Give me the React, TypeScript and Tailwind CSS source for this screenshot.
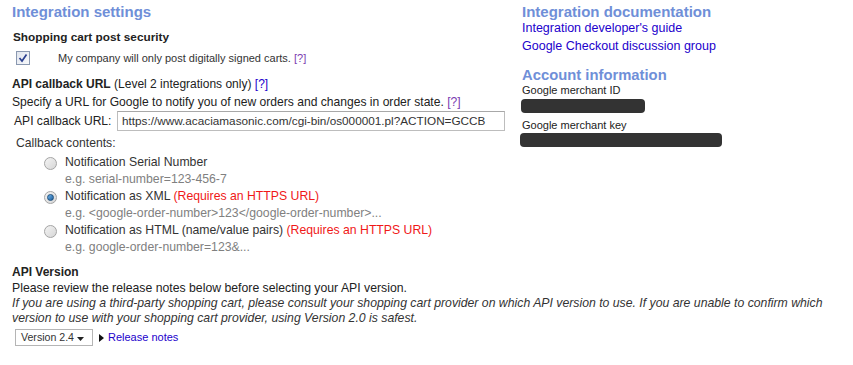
import React from 'react'

const font = { fontFamily: '"Liberation Sans", Arial, sans-serif' }

function Radio({ checked }: { checked?: boolean }) {
  return (
    <span className="relative mt-[2px] flex h-[13px] w-[13px] shrink-0 items-center justify-center rounded-full border border-[#a4a4a4] bg-gradient-to-br from-[#f4f4f4] to-[#d6d6d6]">
      {checked && (
        <span className="h-[7px] w-[7px] rounded-full border border-[#1d4f7c] bg-gradient-to-br from-[#6fb3e8] to-[#1b5f9e]" />
      )}
    </span>
  )
}

function Help() {
  return <span className="text-[#7a3bb0]">[?]</span>
}

export default function App() {
  const options = [
    { label: 'Notification Serial Number', req: false, example: 'e.g. serial-number=123-456-7' },
    {
      label: 'Notification as XML',
      req: true,
      checked: true,
      example: 'e.g. <google-order-number>123</google-order-number>...',
    },
    { label: 'Notification as HTML (name/value pairs)', req: true, example: 'e.g. google-order-number=123&...' },
  ]

  return (
    <div className="h-[365px] w-[853px] overflow-hidden bg-white text-[#222]" style={font}>
      <div className="flex">
        {/* left column */}
        <div className="w-[510px] shrink-0 pl-3 pt-[4px]">
          <h1 className="text-[15px] font-bold leading-[15px] text-[#6f8fd8]">Integration settings</h1>

          <h2 className="mt-[10px] pl-px text-[11.8px] font-bold leading-[16px]">Shopping cart post security</h2>
          <div className="mt-[5px] flex h-[16px] items-center">
            <svg width="14" height="14" viewBox="0 0 14 14" className="ml-[4px]">
              <defs>
                <linearGradient id="cb" x1="0" y1="0" x2="1" y2="1">
                  <stop offset="0" stopColor="#dfe4ee" />
                  <stop offset="1" stopColor="#f8f9fb" />
                </linearGradient>
              </defs>
              <rect x="0.5" y="0.5" width="13" height="13" fill="url(#cb)" stroke="#8a98b0" />
              <path d="M3.5 7 L6 10 L10.5 3.5" fill="none" stroke="#2a3f8f" strokeWidth="1.7" />
            </svg>
            <span className="ml-[28px] text-[11px] leading-[16px] text-[#333]">
              My company will only post digitally signed carts. <Help />
            </span>
          </div>

          <div className="mt-[10px] text-[12px] leading-[16px]">
            <span className="font-bold">API callback URL</span> (Level 2 integrations only){' '}
            <span className="text-[#2200cc]">[?]</span>
          </div>
          <div className="mt-[2px] text-[12.1px] leading-[16px]">
            Specify a URL for Google to notify you of new orders and changes in order state. <Help />
          </div>

          <div className="mt-[1px] flex items-center">
            <span className="w-[105px] pl-[2px] text-[12.1px] leading-[16px]">API callback URL:</span>
            <div className="flex h-[20px] w-[388px] items-center border border-[#bdbdbd] border-t-[#a8a8a8] px-[4px] text-[11.75px] text-[#333]">
              https://www.acaciamasonic.com/cgi-bin/os000001.pl?ACTION=GCCB
            </div>
          </div>

          <div className="mt-[4px] pl-[4px] text-[12.2px] leading-[16px] text-[#333]">Callback contents:</div>

          <div className="mt-[3px] pl-[32px]">
            {options.map(o => (
              <div key={o.label} className="flex gap-[8px]">
                <div className="pt-[1px]">
                  <Radio checked={o.checked} />
                </div>
                <div>
                  <div className="text-[12.25px] leading-[17px] text-[#333]">
                    {o.label} {o.req && <span className="text-[#f01818]">(Requires an HTTPS URL)</span>}
                  </div>
                  <div className="text-[12.25px] leading-[17px] text-[#808080]">{o.example}</div>
                </div>
              </div>
            ))}
          </div>
        </div>

        {/* right column */}
        <div className="pl-[12px] pt-[4px]">
          <h1 className="text-[15px] font-bold leading-[15px] text-[#6f8fd8]">Integration documentation</h1>
          <div className="text-[12.5px] leading-[18px] text-[#2200cc]">Integration developer's guide</div>
          <div className="text-[12.5px] leading-[18px] text-[#2200cc]">Google Checkout discussion group</div>

          <h1 className="mt-[13px] text-[14.8px] font-bold leading-[15px] text-[#6f8fd8]">Account information</h1>
          <div className="text-[11px] leading-[14px] text-[#222]">Google merchant ID</div>
          <div className="mt-[2px] -ml-[1px] h-[14px] w-[124px] rounded-[4px] bg-[#333]" />
          <div className="mt-[5px] text-[11px] leading-[14px] text-[#222]">Google merchant key</div>
          <div className="mt-[1px] -ml-[2px] h-[14px] w-[202px] rounded-[4px] bg-[#333]" />
        </div>
      </div>

      {/* api version */}
      <div className="mt-[8px] pl-3">
        <div className="text-[12px] font-bold leading-[16px]">API Version</div>
        <div className="text-[12.25px] leading-[16px]">
          Please review the release notes below before selecting your API version.
        </div>
        <div className="text-[12.25px] italic leading-[15px] text-[#333]">
          If you are using a third-party shopping cart, please consult your shopping cart provider on which API version to use. If you are unable to confirm which
          <br />
          version to use with your shopping cart provider, using Version 2.0 is safest.
        </div>
        <div className="mt-[3px] flex items-center">
          <div className="ml-[3px] flex h-[17px] w-[78px] items-center justify-between whitespace-nowrap border border-[#b5b5b5] pl-[5px] pr-[8px] text-[10.6px] text-[#333]">
            <span>Version 2.4</span>
            <svg width="7" height="4" viewBox="0 0 7 4" className="mt-[3px]">
              <path d="M0 0 H7 L3.5 4 Z" fill="#222" />
            </svg>
          </div>
          <svg width="5" height="8" viewBox="0 0 5 8" className="ml-[6px]">
            <path d="M0 0 L5 4 L0 8 Z" fill="#111" />
          </svg>
          <span className="ml-[4px] text-[11px] text-[#2200cc]">Release notes</span>
        </div>
      </div>
    </div>
  )
}
